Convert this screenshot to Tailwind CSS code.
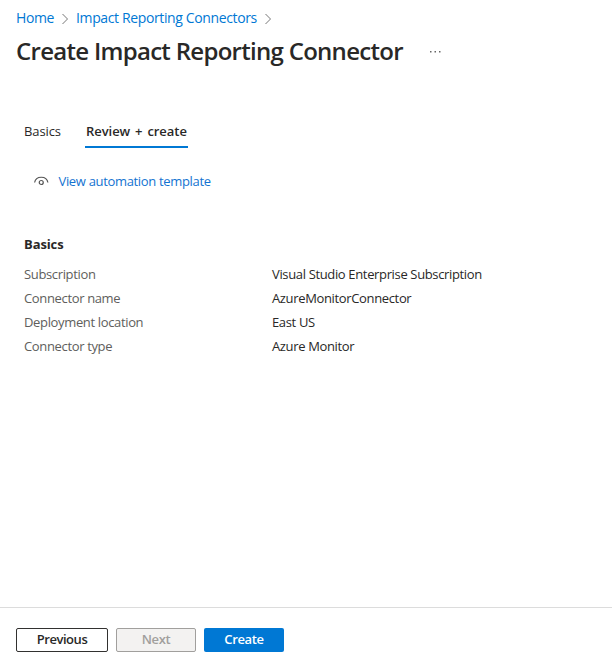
<!DOCTYPE html>
<html lang="en">
<head>
<meta charset="utf-8">
<title>Create Impact Reporting Connector</title>
<script src="https://cdn.jsdelivr.net/npm/@tailwindcss/browser@4"></script>
</head>
<body class="flex h-[668px] w-[612px] flex-col overflow-hidden bg-white font-['Open_Sans',sans-serif] text-[13px] leading-6 tracking-[-0.35px] text-[#292827]">
  <nav class="flex h-9 items-center pl-4 text-[14px] tracking-[-0.37px] text-[#0078d4]">
    <a class="w-[38px] whitespace-nowrap">Home</a>
    <svg class="ml-2 mr-[7px] mt-[2px] h-3 w-[7px]" viewBox="0 0 7 12" fill="none" stroke="#777" stroke-width="1"><path d="M.5 1 5.500 6 .5 11"/></svg>
    <a class="w-[181px] whitespace-nowrap">Impact Reporting Connectors</a>
    <svg class="ml-2 mt-[2px] h-3 w-[7px]" viewBox="0 0 7 12" fill="none" stroke="#777" stroke-width="1"><path d="M.5 1 5.500 6 .5 11"/></svg>
  </nav>
  <header class="flex h-8 items-center pl-4">
    <h1 class="-mt-0.5 w-[414px] whitespace-nowrap text-[24px] font-semibold tracking-[-0.71px]">Create Impact Reporting Connector</h1>
    <svg class="h-3 w-3" viewBox="0 0 12 12" fill="#666"><path d="M0 5h1.500v1.500H0zM4.500 5H6v1.500H4.500zM9 5h1.500v1.500H9z"/></svg>
  </header>
  <div class="mt-[51px] flex h-[29px] gap-6 pl-6">
    <span class="w-[37px] whitespace-nowrap tracking-[-0.1px]">Basics</span>
    <span class="w-[103px] whitespace-nowrap border-b-2 border-[#0078d4] pl-px font-semibold tracking-[-0.05px] [word-spacing:1.600px]">Review + create</span>
  </div>
  <a class="mt-[21px] flex h-6 items-center pl-[34px] tracking-[-0.33px] text-[#1373d1]">
    <svg class="mr-[9.500px] h-4 w-[15px]" viewBox="0 0 15 16" fill="none" stroke="#555" stroke-width="1.200"><path d="M.6 9.500C1.800 2.500 12.700 2.500 13.900 9.500"/><circle cx="7.250" cy="9.500" r="2"/></svg>
    <span>View automation template</span>
  </a>
  <main class="mt-[39px] pl-6">
    <h2 class="mb-1.5 font-bold tracking-[-0.1px]">Basics</h2>
    <dl class="grid grid-cols-[248px_1fr]">
      <dt class="text-[#605e5c]">Subscription</dt><dd>Visual Studio Enterprise Subscription</dd>
      <dt class="text-[#605e5c]">Connector name</dt><dd>AzureMonitorConnector</dd>
      <dt class="text-[#605e5c]">Deployment location</dt><dd>East US</dd>
      <dt class="text-[#605e5c]">Connector type</dt><dd>Azure Monitor</dd>
    </dl>
  </main>
  <footer class="mt-auto flex h-[61px] items-start gap-2 border-t border-[#dcdcdc] pl-4 pt-5 font-semibold">
    <button class="h-6 w-[92px] rounded-xs border border-[#323130] pb-0.5 leading-5 tracking-[-0.45px]">Previous</button>
    <button class="h-6 w-20 rounded-xs border border-[#a19f9d] bg-[#f3f2f1] pb-0.5 leading-5 text-[#a19f9d]" disabled>Next</button>
    <button class="h-6 w-20 rounded-xs bg-[#0078d4] pb-0.5 leading-[22px] text-white">Create</button>
  </footer>
</body>
</html>
